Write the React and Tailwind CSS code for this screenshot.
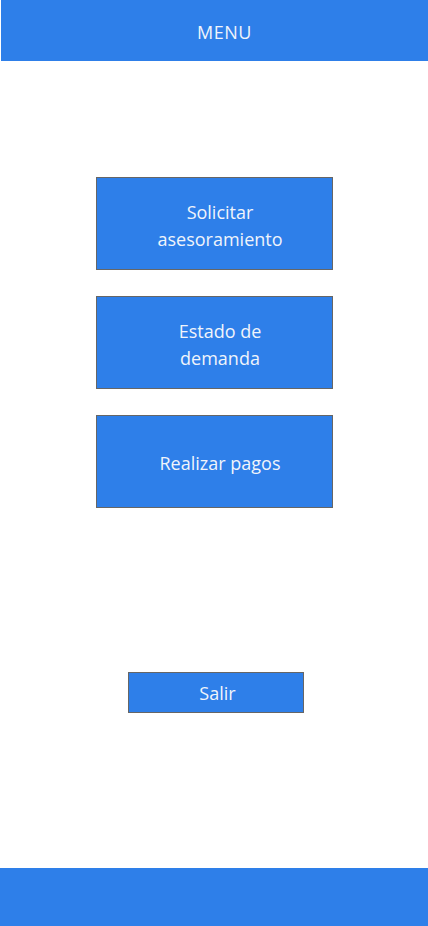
export default function App() {
  const items = [
    ['Solicitar', 'asesoramiento'],
    ['Estado de', 'demanda'],
    ['Realizar pagos'],
  ];

  return (
    <div className="min-h-[926px] bg-white flex flex-col font-['Open_Sans',sans-serif] text-[#f0f4fb] text-[18px]">
      <header className="ml-px h-[61px] bg-[#2e7fe9] flex items-center justify-center tracking-[0.5px] pl-[20px] pt-[3px]">
        MENU
      </header>

      <main className="flex-1 flex flex-col items-center">
        <div className="mt-[116px] flex flex-col gap-[26px]">
          {items.map((lines, i) => (
            <button
              key={i}
              className="w-[237px] h-[93px] bg-[#2e7fe9] border border-[#666] flex flex-col items-center justify-center leading-[27px] pl-[12px] pt-[4px]"
            >
              {lines.map(l => <span key={l}>{l}</span>)}
            </button>
          ))}
        </div>

        <button className="mt-[164px] ml-[3px] w-[176px] h-[41px] bg-[#2e7fe9] border border-[#666] flex items-center justify-center pl-[4px] pt-[1px]">
          Salir
        </button>
      </main>

      <footer className="h-[58px] bg-[#2e7fe9]" />
    </div>
  );
}
